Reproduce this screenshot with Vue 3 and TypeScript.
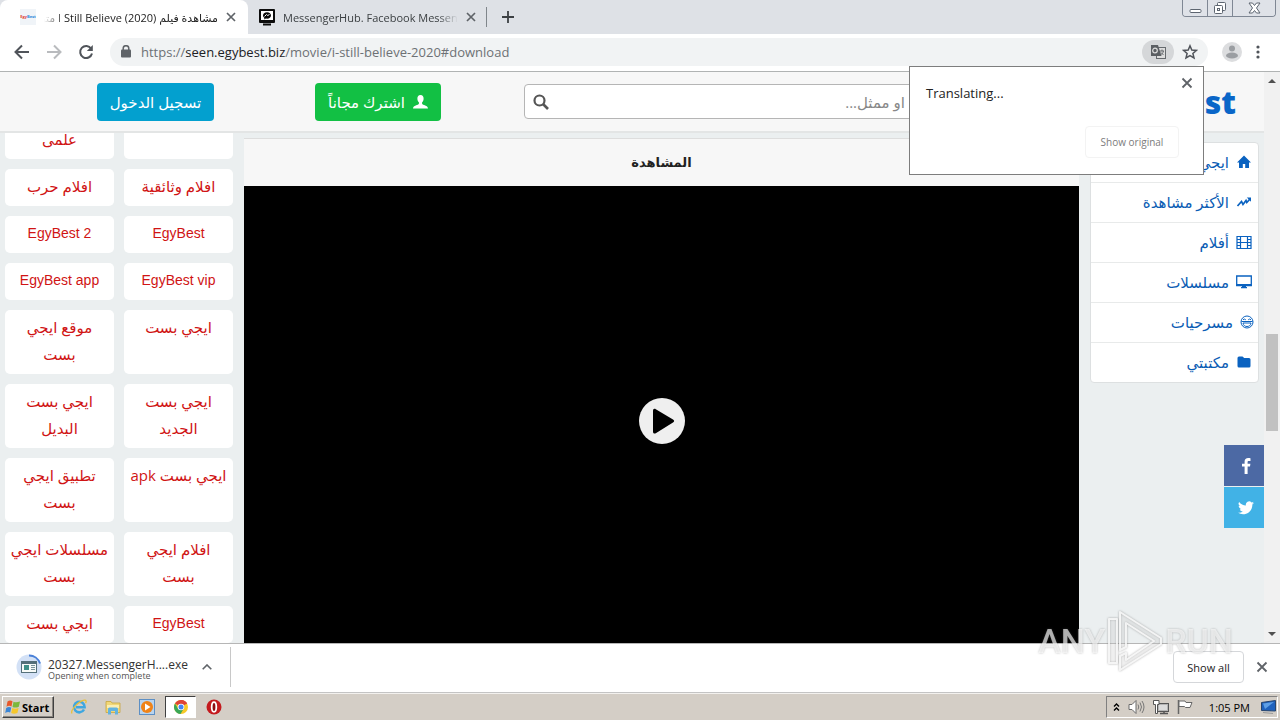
<script setup lang="ts">
interface MenuItem {
  label: string
  icon: 'home' | 'trend' | 'film' | 'tv' | 'mask' | 'folder'
}

const menu: MenuItem[] = [
  { label: 'ايجي بست', icon: 'home' },
  { label: 'الأكثر مشاهدة', icon: 'trend' },
  { label: 'أفلام', icon: 'film' },
  { label: 'مسلسلات', icon: 'tv' },
  { label: 'مسرحيات', icon: 'mask' },
  { label: 'مكتبتي', icon: 'folder' },
]

const tags: string[] = [
  '\nعلمى', '',
  'افلام حرب', 'افلام وثائقية',
  'EgyBest 2', 'EgyBest',
  'EgyBest app', 'EgyBest vip',
  'موقع ايجي\nبست', 'ايجي بست',
  'ايجي بست\nالبديل', 'ايجي بست\nالجديد',
  'تطبيق ايجي\nبست', 'ايجي بست apk',
  'مسلسلات ايجي\nبست', 'افلام ايجي\nبست',
  'ايجي بست', 'EgyBest',
]

const isLatin = (s: string): boolean => /^[A-Za-z0-9 ]+$/.test(s)
</script>

<template>
  <div class="screen">
    <div class="tabstrip">
      <div class="tab active">
        <span class="fav-egy"><i>Egy</i><b>Best</b></span>
        <span class="tab-title rtl" dir="rtl">مشاهدة فيلم <bdi dir="ltr">I Still Believe (2020)</bdi> مترجم</span>
        <button class="plain" aria-label="Close tab">
          <svg width="10" height="10" viewBox="0 0 10 10"><path d="M1 1l8 8M9 1l-8 8" stroke="#5f6368" stroke-width="1.7" /></svg>
        </button>
      </div>
      <div class="tab">
        <svg class="fav" width="16" height="17" viewBox="0 0 16 17">
          <rect width="16" height="14" rx="1" fill="#0c0c0c" />
          <rect x="2" y="2" width="12" height="9" fill="#fff" />
          <path d="M8 3.2c-2.6 0-4 1.500-4 3.300 0 1 .5 1.800 1.300 2.300V10.500l1.500-.9c3 .5 5.200-1 5.200-3.100 0-1.800-1.500-3.300-4-3.300z" fill="#0c0c0c" />
          <path d="M5.500 7.500l2-2 1.200 1 1.800-1" stroke="#fff" fill="none" />
          <path d="M4 15.500h8" stroke="#0c0c0c" stroke-width="2" />
        </svg>
        <span class="tab-title ltr">MessengerHub. Facebook Messenger</span>
        <button class="plain" aria-label="Close tab">
          <svg width="10" height="10" viewBox="0 0 10 10"><path d="M1 1l8 8M9 1l-8 8" stroke="#5f6368" stroke-width="1.700" /></svg>
        </button>
      </div>
      <span class="tab-sep"></span>
      <button class="plain newtab" aria-label="New tab">
        <svg width="12" height="12" viewBox="0 0 12 12"><path d="M6 0v12M0 6h12" stroke="#3c4043" stroke-width="1.800" /></svg>
      </button>
      <div class="win">
        <button aria-label="Minimize"><svg width="13" height="12" viewBox="0 0 13 12"><rect x="1" y="7.500" width="11" height="3" rx="1" fill="#fff" stroke="#5d6570" /></svg></button>
        <button aria-label="Restore"><svg width="14" height="14" viewBox="0 0 14 14"><g fill="#fff" stroke="#5d6570"><rect x="4.500" y="1.500" width="8" height="8" rx="1" /><rect x="1.500" y="4.500" width="8" height="8" rx="1" /><rect x="4.500" y="7.500" width="2" height="2" /></g></svg></button>
        <button aria-label="Close"><svg width="13" height="12" viewBox="0 0 13 12"><path d="M1 1h3.500l2 2.500L8.500 1H12L8.500 6l3.500 5H8.500l-2-2.500-2 2.500H1l3.500-5z" fill="#fff" stroke="#5d6570" /></svg></button>
      </div>
    </div>

    <div class="toolbar">
      <button class="plain" aria-label="Back"><svg width="16" height="16" viewBox="0 0 16 16"><path d="M15 8H2M8 1.500L1.500 8 8 14.500" fill="none" stroke="#50545a" stroke-width="2" /></svg></button>
      <button class="plain" aria-label="Forward"><svg width="16" height="16" viewBox="0 0 16 16"><path d="M1 8h13M8 1.500L14.500 8 8 14.500" fill="none" stroke="#b9bbbe" stroke-width="2" /></svg></button>
      <button class="plain" aria-label="Reload"><svg width="16" height="16" viewBox="0 0 16 16"><path d="M13.200 4.700A6 6 0 1 0 14 9.500" fill="none" stroke="#50545a" stroke-width="2" /><path d="M14.800 1v6h-6z" fill="#50545a" /></svg></button>
      <div class="omnibox">
        <svg width="10" height="13" viewBox="0 0 10 13"><rect y="4.500" width="10" height="8" rx="1" fill="#5f6368" /><path d="M2.200 5V3.500a2.800 2.800 0 0 1 5.600 0V5" fill="none" stroke="#5f6368" stroke-width="1.500" /></svg>
        <span class="url">https://<b>seen.egybest.biz</b>/movie/i-still-believe-2020#download</span>
        <button class="plain translate" aria-label="Translate this page">
          <svg width="16" height="16" viewBox="0 0 16 16"><rect x="6.500" y="3.500" width="9" height="11" fill="#ddd" stroke="#666a6e" /><path d="M1 1h7l3.500 11H1z" fill="#5b5f63" /><circle cx="5" cy="6.500" r="2.300" fill="none" stroke="#ddd" stroke-width="1.200" /><path d="M10 7h4M12 5.500V7M13.500 7c-.5 2-1.500 3-3 4M11 8.500l2.500 2.500" stroke="#666a6e" fill="none" /></svg>
        </button>
        <button class="plain star" aria-label="Bookmark this page">
          <svg width="16" height="16" viewBox="0 0 16 16"><path d="M8 1.800l1.800 4.200 4.600.4-3.500 3 1.100 4.500L8 11.500l-4 2.400 1.100-4.500-3.500-3L6.200 6z" fill="none" stroke="#50545a" stroke-width="1.500" /></svg>
        </button>
      </div>
      <button class="plain avatar" aria-label="Profile">
        <svg width="20" height="20" viewBox="0 0 20 20"><circle cx="10" cy="10" r="10" fill="#dcdddf" /><circle cx="10" cy="6.500" r="3" fill="#9b9ea2" /><ellipse cx="10" cy="13.500" rx="6" ry="3" fill="#9b9ea2" /></svg>
      </button>
      <button class="plain" aria-label="Menu"><svg width="4" height="14" viewBox="0 0 4 14"><g fill="#50545a"><circle cx="2" cy="2" r="1.600" /><circle cx="2" cy="7" r="1.600" /><circle cx="2" cy="12" r="1.600" /></g></svg></button>
    </div>

    <div class="viewport">
      <div class="site">
        <header class="site-head">
          <a href="#login" class="btn login">تسجيل الدخول</a>
          <a href="#signup" class="btn signup" dir="rtl">
            <svg width="15" height="14" viewBox="0 0 15 14"><path d="M7.500 0C5.200 0 4.200 1.700 4.400 4c.1 1.500.7 2.600 1.500 3.300v1.500C5.500 10.300 0 10.300 0 13.500h15c0-3.200-5.500-3.200-5.900-4.700V7.300c.8-.7 1.400-1.800 1.500-3.300.2-2.300-.8-4-3.100-4z" fill="#fff" /></svg>
            <span>اشترك مجاناً</span>
          </a>
          <label class="search">
            <svg width="16" height="16" viewBox="0 0 16 16"><circle cx="6.500" cy="6.500" r="5" fill="none" stroke="#555" stroke-width="2.200" /><path d="M10 10l5 5" stroke="#555" stroke-width="2.600" /></svg>
            <input type="text" dir="rtl" placeholder="او ممثل..." aria-label="بحث" />
          </label>
          <a href="#home" class="logo">EgyBest</a>
        </header>

        <main class="cols">
          <nav class="tags">
            <a v-for="(t, i) in tags" :key="i" href="#tag" :class="['tag', { latin: isLatin(t) }]" :dir="isLatin(t) ? 'ltr' : 'rtl'">{{ t }}</a>
          </nav>
          <section class="watch">
            <h2>المشاهدة</h2>
            <div class="player">
              <button class="plain" aria-label="Play">
                <svg width="46" height="46" viewBox="0 0 46 46"><circle cx="23" cy="23" r="23" fill="#efefef" /><path d="M14 13c0-2 1.200-2.600 2.800-1.800L34 21.500c1.500.9 1.500 2.100 0 3L16.800 35.200c-1.600.8-2.800.2-2.800-1.800z" fill="#000" /></svg>
              </button>
            </div>
          </section>
          <nav class="menu" dir="rtl">
            <a v-for="m in menu" :key="m.icon" href="#section">
              <svg v-if="m.icon === 'home'" width="16" height="16" viewBox="0 0 16 16"><path d="M8 1.500L1 8.500h2V14h3.800v-4h2.400v4H13V8.500h2z" fill="#0a62c0" /></svg>
              <svg v-else-if="m.icon === 'trend'" width="16" height="16" viewBox="0 0 16 16"><path d="M1.500 12l4-4.500 1.500 3 3-4 .8 2L14 5" fill="none" stroke="#0a62c0" stroke-width="1.700" /><path d="M10.800 3.500H15v4.200z" fill="#0a62c0" /></svg>
              <svg v-else-if="m.icon === 'film'" width="16" height="16" viewBox="0 0 16 16"><path d="M1 2.500h14v12H1zM4.500 2.500v12M11.500 2.500v12M4.500 8.500h7M1 5.500h3M1 8.500h3M1 11.500h3M12 5.500h3M12 8.500h3M12 11.500h3" fill="none" stroke="#0a62c0" stroke-width="1.200" /></svg>
              <svg v-else-if="m.icon === 'tv'" width="16" height="16" viewBox="0 0 16 16"><path d="M.7 2h14.600v9.500H.7z" fill="none" stroke="#0a62c0" stroke-width="1.300" /><path d="M.5 10h15v2h-15zM6 12h4v1h1v1.300H5V13h1z" fill="#0a62c0" /></svg>
              <svg v-else-if="m.icon === 'mask'" class="out" width="14" height="14" viewBox="0 0 14 14"><g fill="none" stroke="#0a62c0"><circle cx="7" cy="7" r="6" /><path d="M1.500 6.500h11M3 4.800q1.300-1.500 2.800 0M8.200 4.800q1.300-1.500 2.800 0M3 8h8c-.3 2.500-2 3.500-4 3.500S3.300 10.500 3 8z" /></g></svg>
              <svg v-else width="16" height="16" viewBox="0 0 16 16"><path d="M1.500 4q0-1.500 1.500-1.500h3.500L8.200 4H13q1.500 0 1.500 1.500V12q0 1.500-1.500 1.500H3q-1.500 0-1.500-1.500z" fill="#0a62c0" /></svg>
              <span>{{ m.label }}</span>
            </a>
          </nav>
        </main>

        <div class="share">
          <a href="#facebook" class="fb" aria-label="Facebook"><svg width="10" height="16" viewBox="0 0 10 16"><path d="M9.500.2v2.700H8c-1.200 0-1.400.5-1.400 1.300v1.500h2.800L9 8.600H6.600V16h-3V8.600H1V5.700h2.600V3.600C3.600 1.300 5 0 7.200 0c1 0 2 .1 2.300.2z" fill="#fff" /></svg></a>
          <a href="#twitter" class="tw" aria-label="Twitter"><svg width="16" height="14" viewBox="0 0 24 20"><path d="M24 2.400c-.9.400-1.800.7-2.800.8 1-.6 1.800-1.600 2.200-2.700-1 .6-2 1-3.100 1.200a4.900 4.900 0 0 0-8.400 4.500C7.800 6 4.200 4 1.700.9a4.900 4.900 0 0 0 1.500 6.600C2.400 7.400 1.600 7.200 1 6.800c0 2.300 1.600 4.400 3.900 4.900-.7.200-1.500.2-2.200.1.600 2 2.400 3.400 4.600 3.400A9.900 9.900 0 0 1 0 17.200 13.900 13.900 0 0 0 7.500 19.400c9.100 0 14.300-7.700 14-14.600 1-.7 1.800-1.500 2.500-2.400z" fill="#fff" /></svg></a>
        </div>
      </div>
      <div class="scroll">
        <svg width="8" height="4" viewBox="0 0 8 4"><path d="M0 4l4-4 4 4z" fill="#505050" /></svg>
        <div class="track"><span></span></div>
        <svg width="8" height="4" viewBox="0 0 8 4"><path d="M0 0l4 4 4-4z" fill="#505050" /></svg>
      </div>
    </div>

    <div class="shelf">
      <svg width="26" height="26" viewBox="0 0 26 26"><circle cx="13" cy="13" r="12.500" fill="#d3e1f6" /><path d="M13 1.500A11.500 11.500 0 0 1 24 9.500" fill="none" stroke="#4a80d8" stroke-width="2" /><rect x="5.500" y="7.500" width="15" height="11" fill="#f7faf8" stroke="#55707a" /><path d="M6 9h14" stroke="#55707a" stroke-width="2" /><rect x="8" y="11" width="5" height="5" fill="#3f8f86" /><path d="M15 11.500h4M15 13.500h4M15 15.500h4" stroke="#7a949b" /></svg>
      <div class="dl">
        <span class="name">20327.MessengerH....exe</span>
        <span class="state">Opening when complete</span>
      </div>
      <button class="plain" aria-label="Download options"><svg width="10" height="6" viewBox="0 0 10 6"><path d="M.7 5.300L5 1l4.300 4.300" fill="none" stroke="#5f6368" stroke-width="1.600" /></svg></button>
      <span class="dl-sep"></span>
      <button class="showall">Show all</button>
      <button class="plain" aria-label="Close downloads"><svg width="12" height="12" viewBox="0 0 12 12"><path d="M1.500 1.500l9 9M10.500 1.500l-9 9" stroke="#5f6368" stroke-width="1.800" /></svg></button>
    </div>

    <div class="taskbar">
      <button class="start">
        <svg width="16" height="16" viewBox="0 0 16 16"><path d="M2.500 2.500Q5 .8 7.500 2.300L6.500 7.500Q4 6 1.500 7.800z" fill="#e8582a" /><path d="M8.500 2.700Q11 4 15 2.500L13.800 7.700Q10.500 9.300 7.500 7.900z" fill="#7cb83c" /><path d="M1.200 8.900Q3.800 7.100 6.300 8.600L5.200 13.500Q2.800 12.200.2 14z" fill="#3b86d6" /><path d="M7.300 9Q10.300 10.500 13.600 8.900L12.400 14Q9 15.500 6.200 14z" fill="#f6c72b" /></svg>
        <b>Start</b>
      </button>
      <div class="quick">
        <svg width="16" height="16" viewBox="0 0 16 16"><path d="M13 10.500a5.300 5.300 0 1 1 .6-2.200H5" fill="none" stroke="#3fa7e0" stroke-width="2.600" /><path d="M1 14.500C-1 11 8 2 13.500 1.200c2-.2 2 1.500 1 3" fill="none" stroke="#e9c03a" stroke-width="1.300" /></svg>
        <svg width="16" height="16" viewBox="0 0 16 16"><path d="M1 2.500h5l1 1.500h8v9.500H1z" fill="#f1d777" stroke="#c8a640" stroke-width=".8" /><path d="M2 6h12v3H2z" fill="#fbeeb2" /><path d="M3 15.500V10q0-1.500 1.500-1.500h7Q13 8.500 13 10v5.500h-3v-3.500H6v3.500z" fill="#63b3df" /></svg>
        <svg width="16" height="16" viewBox="0 0 16 16"><rect x=".5" y=".5" width="15" height="15" fill="#b9d4ee" stroke="#5d8fc4" /><circle cx="8" cy="8" r="6" fill="#f08317" /><path d="M6 4.500L11.500 8 6 11.500z" fill="#fff" /></svg>
        <button class="task" aria-label="Chrome">
          <svg width="16" height="16" viewBox="0 0 16 16"><circle cx="8" cy="8" r="7" fill="#f7c928" /><path d="M8 8L1.940 4.500A7 7 0 0 1 14.060 4.500z" fill="#de4437" /><path d="M8 1a7 7 0 0 1 6.100 3.600H8z" fill="#de4437" /><path d="M1.940 4.500A7 7 0 0 0 7.500 15L10.500 10 5 9.500z" fill="#3aa757" /><circle cx="8" cy="8" r="3.300" fill="#fff" /><circle cx="8" cy="8" r="2.500" fill="#4285f4" /></svg>
        </button>
        <svg width="16" height="16" viewBox="0 0 16 16"><circle cx="8" cy="8" r="7.500" fill="#c41a1e" /><ellipse cx="8" cy="8" rx="2.300" ry="4.800" fill="#8c0d11" stroke="#fff" stroke-width="1.800" /></svg>
      </div>
      <div class="tray">
        <svg width="7" height="10" viewBox="0 0 7 10"><path d="M1 4.500l2.500-2.500L6 4.500M1 8.500L3.500 6 6 8.500" fill="none" stroke="#000" stroke-width="1.400" /></svg>
        <svg width="17" height="16" viewBox="0 0 17 16"><path d="M1 5.500h3l4-4v13l-4-4H1z" fill="#fff" stroke="#6b6b6b" /><path d="M10 5.500q1.500 2.500 0 5M12 3.500q3 4.500 0 9M14 2q4 6 0 12" fill="none" stroke="#777" /></svg>
        <svg width="16" height="16" viewBox="0 0 16 16"><rect x="4.500" y="4.500" width="11" height="8" fill="#b5b5b5" stroke="#555" /><rect x="6" y="6" width="8" height="5" fill="#dcdcdc" /><path d="M7 14.500h8M11 12v2" stroke="#555" stroke-width="1.500" /><path d="M.5 1.500h5.500v4H4.500v9h-2v-9h-2z" fill="#fff" stroke="#555" /></svg>
        <svg width="16" height="16" viewBox="0 0 16 16"><path d="M1.500 15V1" stroke="#666" stroke-width="1.500" /><path d="M2 2h6l1 1.500h6L13 8.500H8.500l-1-1H2z" fill="#fff" stroke="#666" /></svg>
        <time>1:05 PM</time>
        <svg width="15" height="14" viewBox="0 0 15 14"><path d="M.5 2.500L14.500.5v10.500l-14-.5z" fill="#1f62bd" stroke="#27456e" /><path d="M2 3.500l11-1.500-9 7z" fill="#5fa0e6" /><path d="M2 12.500l10 1" stroke="#9a9a9a" /></svg>
      </div>
    </div>

    <div class="popup" role="dialog">
      <p>Translating...</p>
      <button class="plain x" aria-label="Close"><svg width="12" height="12" viewBox="0 0 12 12"><path d="M1.500 1.500l9 9M10.500 1.500l-9 9" stroke="#5f6368" stroke-width="1.800" /></svg></button>
      <button class="orig">Show original</button>
    </div>

    <div class="mark">
      <span>ANY</span>
      <svg width="56" height="64" viewBox="0 0 56 64"><g fill="rgba(255,255,255,.2)" stroke="rgba(255,255,255,.8)" stroke-width="2" stroke-linejoin="round"><path d="M2 10h8v44H2z" /><path d="M13 3L54 29v6L13 61V47l6-3v7l28-19L19 14v24l-6 3z" /></g></svg>
      <span>RUN</span>
    </div>
  </div>
</template>

<style>
html,
body,
#app {
  height: 100%;
}
body {
  overflow: hidden;
}
</style>

<style scoped>
* {
  box-sizing: border-box;
}
.screen {
  position: relative;
  display: flex;
  flex-direction: column;
  height: 100vh;
  overflow: hidden;
  background: #fff;
  color: #222;
  font-family: "Open Sans", "DejaVu Sans", sans-serif;
  font-size: 12px;
}
svg {
  display: block;
  flex: none;
}
button {
  font: inherit;
  color: inherit;
}
a {
  text-decoration: none;
}
.plain {
  display: flex;
  align-items: center;
  justify-content: center;
  flex: none;
  padding: 0;
  border: 0;
  background: none;
}

/* tab strip */
.tabstrip {
  display: flex;
  align-items: center;
  flex: none;
  height: 34px;
  background: #dee1e6;
}
.tab {
  display: flex;
  align-items: center;
  gap: 8px;
  width: 240px;
  height: 100%;
  padding: 0 12px 0 11px;
}
.tab.active {
  width: 248px;
  padding-left: 20px;
  border-radius: 8px 8px 0 0;
  background: #fff;
}
.tab-title {
  flex: 1;
  min-width: 0;
  overflow: hidden;
  white-space: nowrap;
  color: #3c4043;
  font-size: 11px;
}
.tab-title.ltr {
  mask-image: linear-gradient(to left, transparent, #000 20px);
}
.tab-title.rtl {
  color: #222;
  mask-image: linear-gradient(to right, transparent, #000 20px);
}
.fav-egy {
  width: 16px;
  height: 16px;
  overflow: hidden;
  background: #f0f4f8;
  font-size: 4px;
  line-height: 16px;
  white-space: nowrap;
  text-align: center;
}
.fav-egy i {
  color: #e03a2f;
  font-style: normal;
  font-weight: 700;
}
.fav-egy b {
  color: #2a8ad8;
}
.tab-sep {
  width: 1px;
  height: 20px;
  margin-left: -2px;
  background: #80868b;
}
.newtab {
  width: 42px;
  height: 28px;
}
.win {
  display: flex;
  align-self: flex-start;
  height: 17px;
  margin: 0 4px 0 auto;
  border: 1px solid #7f8794;
  border-top: 0;
  border-radius: 0 0 4px 4px;
  overflow: hidden;
}
.win button {
  display: flex;
  align-items: center;
  justify-content: center;
  width: 25px;
  padding: 0;
  border: 0;
  border-right: 1px solid #7f8794;
  background: #dfe2e8;
}
.win button:last-child {
  width: 42px;
  border-right: 0;
}

/* toolbar */
.toolbar {
  display: flex;
  align-items: center;
  gap: 16px;
  flex: none;
  height: 38px;
  padding: 0 20px 2px 14px;
  border-bottom: 1px solid #b0b3b3;
}
.omnibox {
  display: flex;
  align-items: center;
  flex: 1;
  height: 28px;
  margin-right: -2px;
  padding: 0 2px 0 11px;
  border-radius: 14px;
  background: #f1f3f4;
}
.avatar {
  margin-right: -2px;
}
.url {
  flex: 1;
  min-width: 0;
  margin-left: 10px;
  overflow: hidden;
  white-space: nowrap;
  color: #6d7175;
  font-size: 13px;
}
.url b {
  color: #202124;
  font-weight: 400;
}
.translate {
  width: 32px;
  height: 24px;
  border-radius: 12px;
  background: #d5d7d9;
}
.star {
  width: 32px;
}

/* page viewport */
.viewport {
  display: flex;
  flex: 1;
  min-height: 0;
}
.site {
  position: relative;
  display: flex;
  flex-direction: column;
  flex: 1;
  min-width: 0;
  background: #ebeff0;
}
.site-head {
  display: flex;
  align-items: center;
  flex: none;
  height: 61px;
  padding: 0 28px 0 97px;
  border-bottom: 2px solid #e3e5e5;
  background: #f7f7f7;
}
.btn {
  display: flex;
  align-items: center;
  justify-content: center;
  gap: 8px;
  height: 38px;
  border-radius: 4px;
  color: #fff;
  font-size: 15px;
  white-space: nowrap;
}
.login {
  width: 117px;
  margin-right: 101px;
  background: #03a0cf;
}
.signup {
  width: 126px;
  margin-right: 83px;
  background: #12c044;
}
.search {
  display: flex;
  align-items: center;
  flex: 1;
  min-width: 0;
  height: 35px;
  margin-right: 8px;
  padding-left: 8px;
  border: 1px solid #b5b5b5;
  border-radius: 4px;
  background: #fff;
}
.search input {
  flex: 1;
  min-width: 0;
  padding: 0 193px 0 8px;
  border: 0;
  outline: 0;
  background: none;
  font: 15px "Open Sans", "DejaVu Sans", sans-serif;
}
.search input::placeholder {
  color: #888;
}
.logo {
  color: #0a66c8;
  font-size: 32px;
  font-weight: 800;
}

.cols {
  display: flex;
  flex: 1;
  align-items: flex-start;
  min-height: 0;
  overflow: hidden;
}
.tags {
  display: grid;
  grid-template-columns: 109px 109px;
  gap: 10px;
  flex: none;
  margin: -38px 11px 0 5px;
}
.tag {
  padding: 4px 0 6px;
  border-radius: 5px;
  background: #fff;
  color: #d01414;
  font-size: 15px;
  line-height: 27px;
  text-align: center;
  white-space: pre;
}
.tag.latin {
  font-family: "Liberation Sans", Arial, sans-serif;
  font-size: 14px;
}
.watch {
  display: flex;
  flex: 1;
  flex-direction: column;
  align-self: stretch;
  min-width: 0;
  margin-top: 5px;
  background: #f7f7f7;
}
.watch h2 {
  margin: 0;
  padding: 0;
  border-top: 1px solid #ddd;
  color: #222;
  font-size: 13px;
  line-height: 47px;
  text-align: center;
}
.player {
  display: flex;
  flex: none;
  align-items: center;
  justify-content: center;
  height: 470px;
  background: #000;
}
.menu {
  flex: none;
  width: 169px;
  margin: 9px 5px 0 11px;
  border: 1px solid #dde0e1;
  border-radius: 4px;
  background: #fff;
}
.menu a {
  display: flex;
  align-items: center;
  gap: 7px;
  height: 40px;
  padding: 0 6px 2px;
  border-bottom: 1px solid #e8eaea;
  color: #0a5cb4;
  font-size: 15px;
}
.menu a:last-child {
  height: 39px;
  border-bottom: 0;
}
.menu .out {
  margin-right: -2px;
}
.share {
  position: absolute;
  top: 373px;
  right: 0;
  display: grid;
  gap: 1px;
}
.share a {
  display: flex;
  align-items: center;
  justify-content: center;
  width: 40px;
  height: 41px;
  padding-left: 3px;
}
.fb {
  background: #4c69a4;
}
.tw {
  background: #41b2e6;
}
.scroll {
  display: flex;
  flex-direction: column;
  align-items: center;
  flex: none;
  gap: 6px;
  width: 16px;
  padding: 7px 0;
  background: #f1f1f1;
}
.track {
  display: flex;
  flex-direction: column;
  flex: 1;
}
.track::before {
  flex: 246;
  content: "";
}
.track::after {
  flex: 196;
  content: "";
}
.track span {
  flex: 97;
  width: 12px;
  background: #c1c1c1;
}

/* download shelf */
.shelf {
  display: flex;
  align-items: center;
  flex: none;
  height: 50px;
  padding: 0 12px 2px 16px;
  border-top: 1px solid #b6b6b6;
  border-bottom: 1px solid #c4c4c4;
  background: #fff;
}
.dl {
  display: flex;
  flex-direction: column;
  width: 154px;
  margin-left: 6px;
  padding-top: 4px;
  white-space: nowrap;
}
.name {
  color: #333;
  font-size: 12px;
  line-height: 13px;
}
.state {
  color: #555;
  font-size: 9px;
  line-height: 10px;
}
.dl-sep {
  width: 1px;
  height: 40px;
  margin-left: 18px;
  background: #c8c8c8;
}
.showall {
  width: 71px;
  height: 32px;
  margin: 0 12px 0 auto;
  border: 1px solid #d5d7da;
  border-radius: 4px;
  background: #fff;
  font-size: 11px;
}

/* taskbar */
.taskbar {
  display: flex;
  align-items: center;
  flex: none;
  height: 27px;
  padding: 0 2px;
  border-top: 1px solid #f3f1ee;
  background: #d4cec6;
}
.start {
  display: flex;
  align-items: center;
  gap: 1px;
  width: 52px;
  height: 22px;
  padding: 0 2px;
  border: 1px solid;
  border-color: #fff #404040 #404040 #fff;
  box-shadow: inset -1px -1px #8a8680;
  background: #d4cec6;
  color: #000;
  font-size: 11px;
}
.quick {
  display: flex;
  align-items: center;
  gap: 18px;
  margin-left: 17px;
}
.task {
  display: flex;
  align-items: center;
  justify-content: center;
  width: 31px;
  height: 22px;
  margin: 0 -8px;
  padding: 0;
  border: 1px solid;
  border-color: #404040 #fff #fff #404040;
  background: #fff;
}
.tray {
  display: flex;
  align-items: center;
  gap: 8px;
  height: 22px;
  margin-left: auto;
  padding: 0 1px 0 6px;
  border: 1px solid;
  border-color: #808080 #fff #fff #808080;
  color: #000;
}
.tray time {
  margin: 0 3px 0 8px;
  font-size: 11px;
}

/* translate bubble */
.popup {
  position: absolute;
  top: 66px;
  right: 76px;
  width: 295px;
  height: 109px;
  border: 1px solid #7d7d7d;
  background: #fff;
}
.popup p {
  margin: 17px 16px;
  font-size: 13px;
  line-height: 18px;
}
.popup .x {
  position: absolute;
  top: 10px;
  right: 10px;
}
.orig {
  position: absolute;
  right: 24px;
  bottom: 16px;
  width: 94px;
  height: 32px;
  padding: 0;
  border: 1px solid #f3f3f3;
  border-radius: 4px;
  background: #fff;
  color: #7c7c7c;
  font-size: 10px;
}

/* corner watermark */
.mark {
  position: absolute;
  right: 47px;
  bottom: 47px;
  display: flex;
  align-items: center;
  gap: 2px;
  color: rgba(255, 255, 255, 0.65);
  font-family: Roboto, sans-serif;
  font-size: 34px;
  font-weight: 500;
  line-height: 64px;
  filter: drop-shadow(0 0 1px rgba(90, 90, 90, 0.6));
  pointer-events: none;
}
</style>
